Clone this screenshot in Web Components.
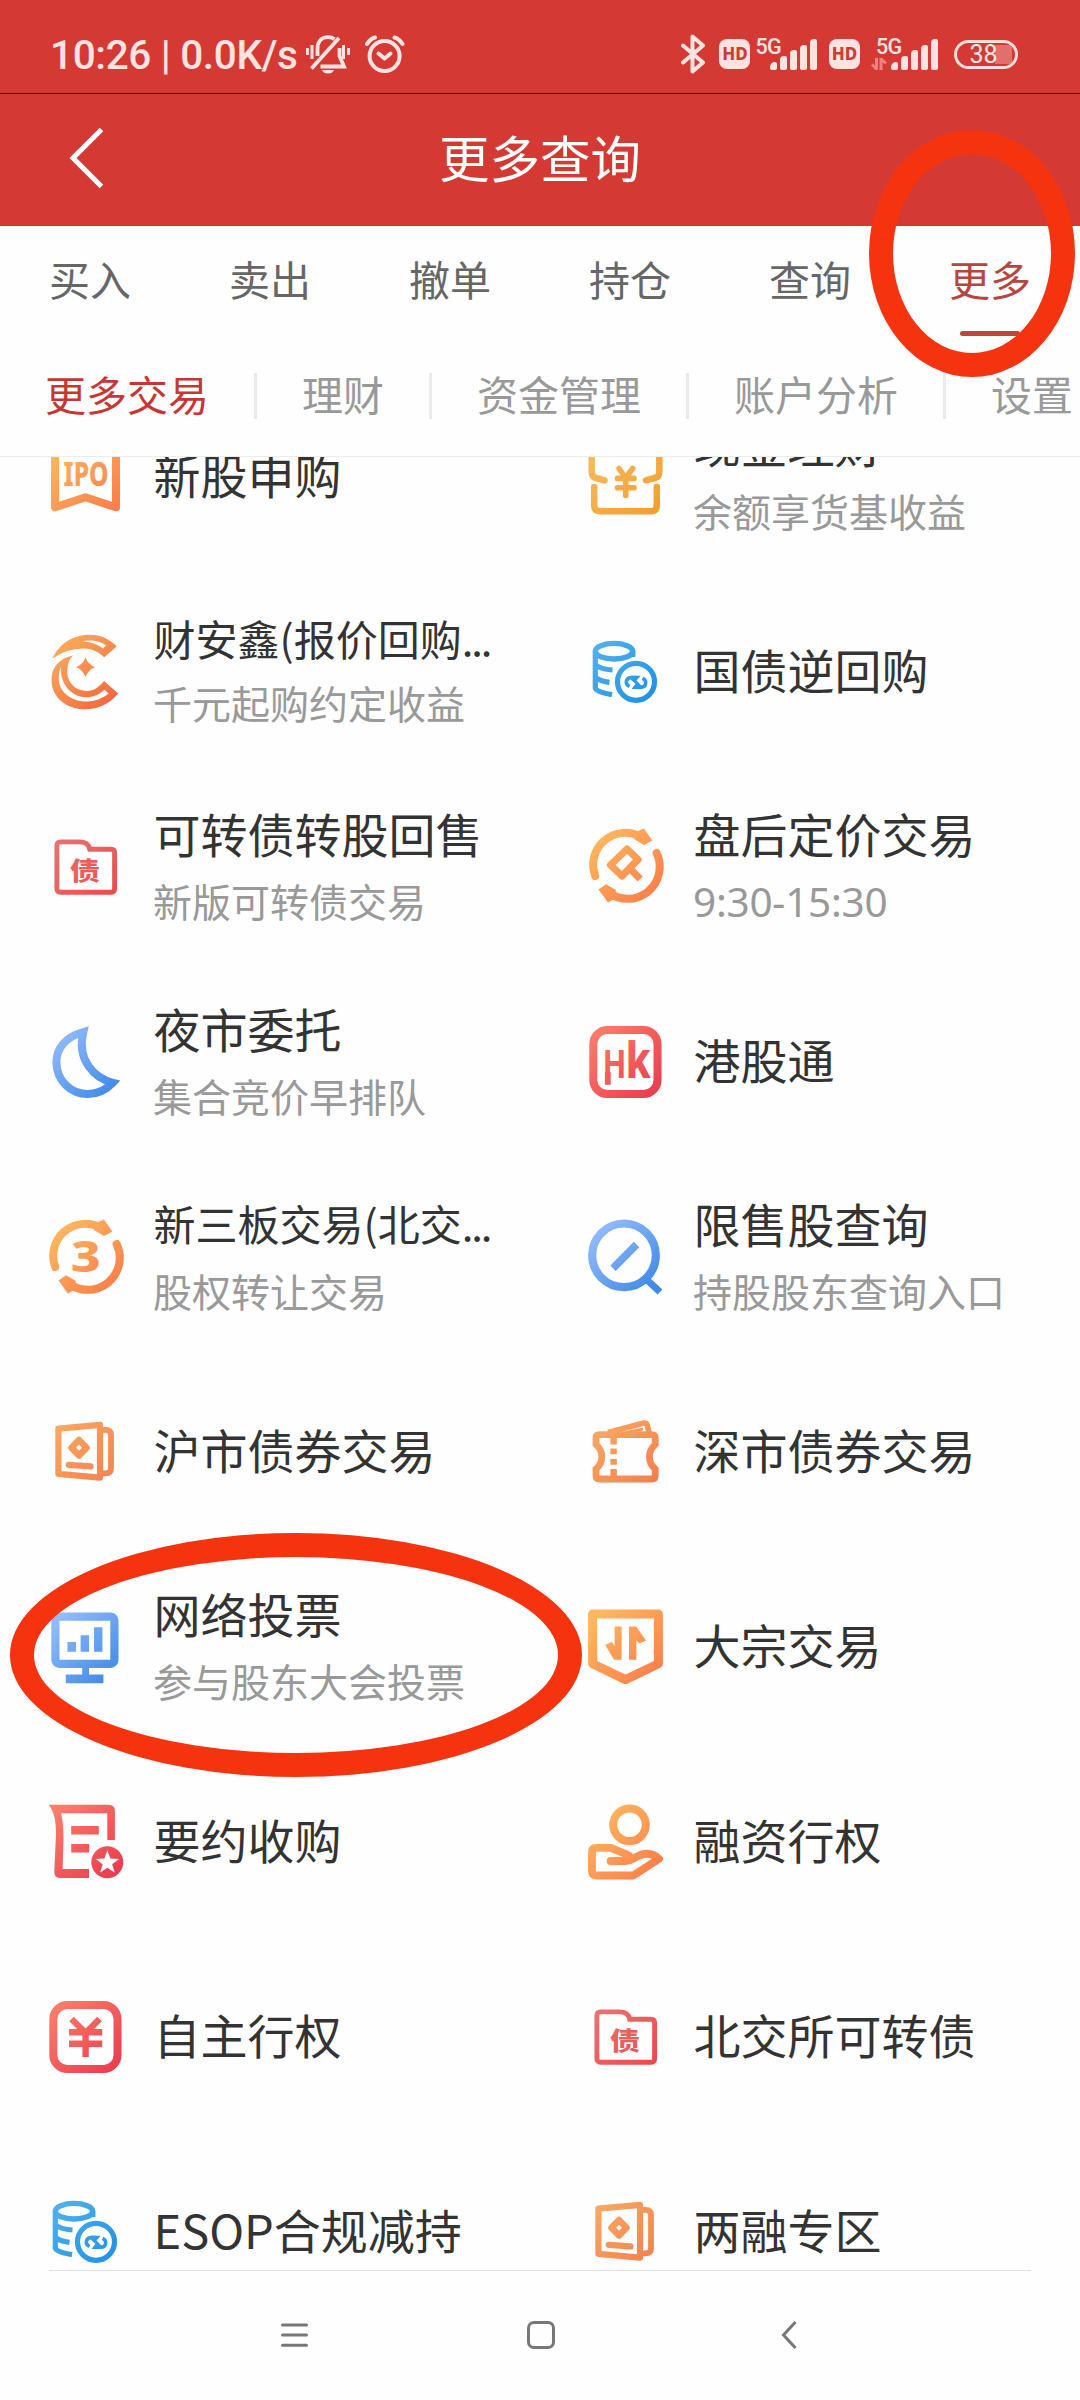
<!DOCTYPE html>
<html lang="zh-CN">
<head>
<meta charset="utf-8">
<title>更多查询</title>
<style>
html,body{margin:0;padding:0}
body{width:1080px;height:2400px;overflow:hidden;background:#fefefe;font-family:"Noto Sans CJK SC",sans-serif}
</style>
</head>
<body>
<trade-page></trade-page>
<script>
const define = (name, html) => customElements.define(name, class extends HTMLElement {
  constructor() {
    super();
    const t = document.createElement('template');
    t.innerHTML = html;
    this.attachShadow({ mode: 'open' }).append(t.content.cloneNode(true));
  }
});

/* ---- Icons, all on a 76 unit square ---- */
const PALETTE = {
  orange: ['#ffb860', '#fb7f4a'],
  amber: ['#fbae5c', '#f2673f'],
  book: ['#f8aa62', '#f4804f'],
  gold: ['#f6bb62', '#f3a02f'],
  red: ['#fb7c69', '#e93f50'],
  rose: ['#e97474', '#ea4a48'],
  blue: ['#95bdfb', '#3f8ae6'],
  sky: ['#52b1ec', '#1d90e8']
};
const ringArrows = `
  <path d="M7.2 48A32 32 0 0 1 52 8.5" stroke-width="8" stroke-linecap="round"/>
  <path d="M68.6 25A32 32 0 0 1 20 64" stroke-width="8" stroke-linecap="round"/>
  <path d="M50 3 56 .6 64.3 12.6 56 17 46 11ZM10.5 61.5 18 56.3 28 62 25 71.5 20 74.5Z" class="f"/>`;
const frame = `<rect x="5.3" y="6" width="64.2" height="64" rx="14" stroke-width="8"/>`;
const ICONS = {
  ipo: ['orange', `<path d="M7 4H68V68.3L37.5 58.3 7 68.3Z" stroke-width="8" stroke-linejoin="round"/>
    <text x="15.500" y="47.3" font-family="Noto Sans" font-weight="800" font-size="33" textLength="45" lengthAdjust="spacingAndGlyphs">IPO</text>`],
  cash: ['gold', `<path d="M16.5 41.3 8 39Q3.7 38 3.7 33V12Q3.7 6 10 6H65Q71.3 6 71.3 12V33Q71.3 38 67 39L58 41.3M6.2 48V66Q6.2 72.2 12 72.2H63Q68.8 72.2 68.8 66V48" stroke-width="6.5" stroke-linecap="round"/>
    <path d="M31 29.5 37.7 39 44.6 29.5M37.7 39V56.5M29.5 39.4H46M29.5 48.8H46" stroke-width="5.6" stroke-linecap="round"/>`],
  cash2: ['amber', `<path class="f" d="M4.3 24.8C12 8 27 .8 42 .8 53 .8 62 5.5 68.6 12.4L56.2 23.2C50 17.5 44 14.5 36 14.5 24 14.5 14 18 4.3 24.8Z"/>
    <path class="w" d="M34 7.3C43 5.6 52 6.8 58.2 11.3L55 14.6C48 9.4 42 8 34 7.3Z"/>
    <path class="f" d="M24.8 21.5C10 25 3.5 34 3.5 46 3.5 63 18 75.3 37 75.3 51 75.3 61 70 70.2 59.5L56 47C51 53 46 57 39 57 27 57 19.3 48 19.3 38 19.3 31 21 26 24.8 21.5Z"/>
    <path class="w" d="M13 32.500C8.500 44 10.500 55.500 20 62 32 70 49 69.500 60.500 59.6L56.6 55.8C47 64.3 36 65.2 27 60.5 16.500 54.500 12 43.500 13 32.500Z"/>
    <path class="f" d="M37.5 23.500Q40 30.500 47 33.2 40 35.9 37.5 43 35 35.9 28 33.2 35 30.500 37.5 23.500Z"/>`],
  coins: ['sky', `<ellipse cx="26" cy="17.2" rx="18.6" ry="7.8" stroke-width="5.4"/>
    <path d="M7.3 17V54Q8 57.8 24 60.6M7.3 30.5Q12 35.3 24.5 36M7.3 43Q11 47 21.5 48.3M44.8 17V23" stroke-width="5.2"/>
    <circle cx="48" cy="47.8" r="18.5" stroke-width="5.2"/>
    <path d="M48 43.6H43Q38.3 44 38.3 48.4 38.4 51 41.5 52.4M48 53.2H53Q57.7 52.8 57.7 48.4 57.6 45.6 54.5 44.4" stroke-width="3.6"/>
    <path class="f" d="M43 41.800H52.800L48.500 46.500 53.500 51.500V55H43.500L47.500 49.800 43 46Z"/><path d="M52.500 42.500 44 54" stroke-width="0"/>`],
  folder: ['rose', `<path d="M12.5 12.9H31Q40.5 12.9 41.8 20.3H63Q66.6 20.3 66.6 24V59.5Q66.6 63.2 63 63.2H12.5Q8.9 63.2 8.9 59.5V16.5Q8.9 12.9 12.5 12.9Z" stroke-width="4.9"/>
    <text x="22" y="51" font-family="Noto Sans CJK SC" font-weight="900" font-size="25" textLength="30" lengthAdjust="spacingAndGlyphs">债</text>`],
  tag: ['orange', `<g transform="translate(0 -1)">` + ringArrows + `<path d="M39 21 50 31.5 34 48 22.5 37Z" stroke-width="7.2" stroke-linejoin="round"/><path d="M42 40.5 52.2 51" stroke-width="7"/></g>`],
  moon: ['blue', `<path d="M35.3 8C17 13 8.4 25 8.4 38 8.4 57 23 70 40 70 50.5 70 58 66 64.8 58.8 46 54 28.5 36 35.3 8Z" stroke-width="8" stroke-miterlimit="2.2"/>`],
  hk: ['red', frame + `<text x="14.500" y="53.8" font-family="Noto Sans" font-weight="700" font-size="38.5" textLength="24" lengthAdjust="spacingAndGlyphs">H</text><text x="37.8" y="53.8" font-family="Noto Sans" font-weight="800" font-size="50" textLength="25" lengthAdjust="spacingAndGlyphs">k</text><rect class="f" x="16.9" y="48" width="5.8" height="12.8"/>`],
  three: ['orange', ringArrows + `<text x="22.8" y="52.6" font-family="Noto Sans" font-weight="800" font-size="42" textLength="30" lengthAdjust="spacingAndGlyphs">3</text>`],
  search: ['blue', `<circle cx="36" cy="36.3" r="31.8" stroke-width="8.2"/><path d="M57.5 59.5 72 73" stroke-width="7"/><path d="M48.5 25.5 25 49.2" stroke-width="7.6"/>`],
  book: ['book', `<path d="M10.4 14.6 52 10.8V63.6L10.4 59.8Z" stroke-width="6.2" stroke-linejoin="round"/>
    <path d="M54 15.8H57.5Q63 15.8 63 21V54Q63 59.4 57.5 59.4H54" stroke-width="5.8"/>
    <path d="M31 26 38.5 33.7 31 41.4 23.5 33.7Z" stroke-width="6.6" stroke-linejoin="round"/><path d="M20.8 50.8 42.5 52.4" stroke-width="6.2" stroke-linecap="round"/>`],
  ticket: ['book', `<path d="M11.5 20.6H64Q67.2 20.6 67.2 24V30.5C59.5 37 59.5 48.5 67.2 55V61.5Q67.2 65 64 65H11.5Q8 65 8 61.5V55C15.7 48.5 15.7 37 8 30.5V24Q8 20.6 11.5 20.6Z" stroke-width="6.8"/>
    <path d="M20 18.5 55 9.3Q58.5 8.6 59.4 11.5L61 19" stroke-width="5.6"/><path d="M38 18.500 55 15" stroke-width="3"/>
    <path d="M25.6 24V30.5M25.6 34.5V40.3M25.6 45V50.7M25.6 55V62" stroke-width="6.400"/>`],
  monitor: ['blue', `<rect x="7.4" y="7.6" width="59" height="47.2" rx="4" stroke-width="8.2"/>
    <path class="f" d="M34.2 57H41V65.5H55.4V74.2H17.8V65.5H34.2ZM19.4 33H28V42.8H19.4ZM32.6 26.2H41V42.8H32.6ZM46 18.2H54.4V42.8H46Z"/>`],
  block: ['orange', `<path d="M4.6 4.9H70.4V54.8L37.5 70.6 4.6 54.8Z" stroke-width="9" stroke-linejoin="round"/>
    <path class="f" d="M26.6 17.4H33.6V50.8H26L17.2 36 24 33 26.6 37ZM41 50.8V17.4H48.2L58 31.4 51.6 34.6 48.4 31.5V50.8Z"/>`],
  doc: ['red', `<path class="f" d="M.8 .8H60.5Q66.9 .8 66.9 7V36H59.3V9.2H13C15 18 15.5 24 15.5 34L14.6 65H41V74H12Q6 74 6.3 67L8 30C8 16 6 8 .8 .8ZM23.2 22H50.8V30.6H23.2ZM23.2 40H41.2V48.6H23.2Z"/>
    <circle cx="59.3" cy="58.3" r="16" class="f"/>
    <path class="w" d="M59.3 46.2 62.4 54.6 71 54.9 64.2 60.2 66.6 68.6 59.3 63.7 52.2 68.6 54.6 60.2 47.8 54.9 56.4 54.6Z"/>`],
  hand: ['orange', `<circle cx="41.5" cy="20.8" r="16.3" stroke-width="8"/>
    <path d="M22.6 57H36Q41 57.5 46 54.2C56 47.8 64 48.2 71 54.8L45.3 71.5H8.5Q4 71.5 4 67V48Q4 43.8 8.5 43.8H23L41 51.5" stroke-width="7.8" stroke-linecap="round" stroke-linejoin="round"/>`],
  yen: ['red', frame + `<path d="M23.5 20 37.6 34 51.5 20M37.6 33V58M21 33.2H54.2M21 44.8H54.2" stroke-width="6.4"/>`]
};
customElements.define('app-icon', class extends HTMLElement {
  constructor() { super(); this.attachShadow({ mode: 'open' }); }
  connectedCallback() {
    const [tone, shapes] = ICONS[this.getAttribute('name')];
    const [a, b] = PALETTE[tone];
    this.shadowRoot.innerHTML = `<style>:host{display:block;width:76px;height:76px;flex:none}
      svg{display:block;overflow:visible;fill:none;stroke:url(#g)}
      .f,text{fill:url(#g);stroke:none}.w{fill:#fefefe;stroke:none}</style>
      <svg width="76" height="76" viewBox="0 0 76 76"><defs><linearGradient id="g" gradientUnits="userSpaceOnUse" x1="8" y1="8" x2="66" y2="68">
      <stop stop-color="${a}"/><stop offset="1" stop-color="${b}"/></linearGradient></defs>${shapes}</svg>`;
  }
});

/* ---- Status bar ---- */
define('signal-bars', `<style>:host{display:flex;align-items:flex-end;gap:3.1px;height:31px}
  i{width:7px;background:#ffe3e1;border-radius:2px}</style>
  <i style="height:8px;border-top-left-radius:5px"></i><i style="height:14px;border-top-left-radius:4px"></i><i style="height:20px;border-top-left-radius:4px"></i><i style="height:25px;border-top-left-radius:4px"></i><i style="height:31px;border-top-left-radius:4px"></i>`);
define('hd-badge', `<style>:host{display:flex;align-items:center;justify-content:center;width:31px;height:30px;border-radius:8px;background:#ffe3e1;color:#cf3c35;font:800 17px/30px "Noto Sans",sans-serif}</style>HD`);
define('battery-pill', `<style>:host{display:flex;box-sizing:border-box;width:64px;height:29px;border:3px solid #ffdedb;border-radius:15px;justify-content:center;align-items:center;color:#ffe8e6;
  font:400 25px/24px Roboto,sans-serif;background:linear-gradient(90deg,#e2706a,#e2706a) 38px 50%/17px 19px no-repeat;}span{padding-right:5px;padding-top:1px}</style><span><slot></slot></span>`);
define('status-bar', `<style>
  :host{display:flex;box-sizing:border-box;height:93px;padding:15px 62px 0 50px;align-items:center;color:#ffe3e1}
  .clock{font:500 40.500px/48px Roboto,sans-serif;width:248px;margin-right:8px;padding-top:1px;white-space:nowrap;letter-spacing:-.350px}
  svg{display:block;flex:none}
  .right{margin-left:auto;display:flex;align-items:center}
  .g{font:500 21.5px/22px Roboto,sans-serif;align-self:flex-start;letter-spacing:-.6px}
  .net{display:flex;height:36px;align-items:flex-start}
  .col{display:flex;flex-direction:column}
  </style>
  <span class="clock">10:26 | 0.0K/s</span>
  <svg width="44" height="40" viewBox="0 0 44 40" fill="none" stroke="#ffe3e1" stroke-width="3.8">
    <path d="M1.4 14V21M6 11V25M37.5 11V25M42.6 14V21" stroke-width="3"/><path d="M33 4 5.5 34.5"/>
    <path d="M11.5 22V15C11.5 6 17 3.2 22 3.2Q26 3.2 28.5 5.2M33.5 14V22L38 32.5H14.5"/><path d="M16 36H28Q26.5 39.5 22 39.5 17.500 39.500 16 36Z" fill="#ffe3e1" stroke="none"/>
  </svg>
  <svg width="40" height="38" viewBox="0 0 40 38" fill="none" stroke="#ffe3e1" stroke-width="4" style="margin-left:15px">
    <circle cx="19.600" cy="21" r="15"/><path d="M13.500 18.500 19.600 23.500 25.500 18.500" stroke-width="4" stroke-linecap="round" stroke-linejoin="round"/><path d="M2 9Q5 4 10 2.500M29.500 2.500Q34.500 4 37.500 9" stroke-linecap="round"/>
  </svg>
  <div class="right">
    <svg width="25" height="40" viewBox="0 0 25 40" fill="none" stroke="#ffe3e1" stroke-width="4" stroke-linejoin="round" stroke-linecap="round"><path d="M2 11.500 22 28.500 11.500 37.500V2.500L22 11.500 2 28.500"/></svg>
    <hd-badge style="margin-left:13px"></hd-badge>
    <div class="net" style="margin-left:5px"><span class="g">5G</span><signal-bars style="margin:3px 0 0 -11px"></signal-bars></div>
    <hd-badge style="margin-left:11.500px"></hd-badge>
    <div class="net" style="margin-left:11px"><div class="col"><span class="g" style="margin-left:5px">5G</span>
      <svg width="16" height="12" viewBox="0 0 16 12" fill="none" stroke="#ee827c" stroke-width="3"><path d="M5.500 0V11L1 6.500M10 12V1L15 5.500"/></svg></div>
      <signal-bars style="margin:3px 0 0 -11px"></signal-bars></div>
    <battery-pill style="margin-left:16px">38</battery-pill>
  </div>`);

define('app-header', `<style>
  :host{display:grid;grid-template-columns:1fr auto 1fr;align-items:center;box-sizing:border-box;height:133px;border-top:1px solid #3d0f10;color:#fff}
  svg{display:block;margin-left:69px;margin-bottom:5px}
  h1{margin:0;font-size:50.5px;font-weight:400;line-height:72px;padding-bottom:8px}</style>
  <svg width="36" height="62" viewBox="0 0 36 62" fill="none" stroke="#fff" stroke-width="5"><path d="M32.500 2.500 4 31 32.500 59.500"/></svg>
  <h1><slot></slot></h1>`);

/* ---- Tabs ---- */
define('main-tab', `<style>:host{flex:1;display:flex;flex-direction:column;align-items:center;padding-top:22px;color:#666;font-size:41px;line-height:60px}
  i{height:5px;width:60px;border-radius:3px;margin-top:23px}
  :host([active]){color:#b8443d}:host([active]) i{background:#bd463f}</style><slot></slot><i></i>`);
define('main-tabs', `<style>:host{display:flex;height:126px}</style><slot></slot>`);
define('sub-tab', `<style>:host{flex:none;padding:0 45px;border-right:3px solid #eaeaea;color:#999;font-size:41px;line-height:46px;height:46px;white-space:nowrap}
  :host([active]){color:#c93632;padding-left:45px;padding-right:45px}:host(:last-child){border:0}span{display:block;margin-top:-3px}</style><span><slot></slot></span>`);
define('sub-tabs', `<style>:host{display:flex;box-sizing:border-box;height:105px;padding-top:21px;border-bottom:1px solid #ebebeb;overflow:hidden}</style><slot></slot>`);

/* ---- Menu ---- */
customElements.define('menu-item', class extends HTMLElement {
  constructor() { super(); this.attachShadow({ mode: 'open' }); }
  connectedCallback() {
    const sub = this.getAttribute('sub');
    this.shadowRoot.innerHTML = `<style>
      :host{display:flex;align-items:center;height:195px;padding-left:48px;gap:29.500px;box-sizing:border-box;white-space:nowrap}
      .t{font-size:47px;line-height:66px;color:#333;padding-bottom:6px}
      :host([small]) .t{font-size:42px}
      .t.two{padding:0}
      .s{font-size:39px;line-height:50px;color:#999;margin:9.500px 0 8px -.500px}
      :host([tight]) .s{margin-top:6px;margin-bottom:11.500px}
      .dots{letter-spacing:-2.200px}
      .s.num{font-family:"Noto Sans","Noto Sans CJK SC",sans-serif;font-size:40.500px;letter-spacing:-.250px;margin-top:11px;margin-bottom:6.500px}
      </style><app-icon name="${this.getAttribute('icon')}"></app-icon>
      <div><div class="t ${sub ? 'two' : ''}">${this.textContent.replace('...', '<span class="dots">...</span>')}</div>${sub ? `<div class="s ${/^\d/.test(sub) ? 'num' : ''}">${sub}</div>` : ''}</div>`;
  }
});
define('menu-grid', `<style>:host{display:block;height:1813px;overflow:hidden}
  div{display:grid;grid-template-columns:540px 540px;grid-auto-rows:195px;margin-top:-78px}</style><div><slot></slot></div>`);

define('system-nav', `<style>:host{display:flex;height:129px;flex-direction:column;align-items:center}
  hr{width:982px;height:1px;border:0;background:#e2e2e2;margin:0}
  div{display:flex;width:516px;margin:50px 0 0 -2px;align-items:center}
  svg{display:block}</style><hr>
  <div><svg width="27" height="28" viewBox="0 0 27 28" stroke="#777" stroke-width="3" stroke-linecap="round"><path d="M1.500 4H25.500M1.500 14H25.500M1.500 24.200H25.500"/></svg>
  <svg style="margin:0 226px 0 219px" width="28" height="28" viewBox="0 0 28 28" fill="none" stroke="#777" stroke-width="3"><rect x="1.500" y="1.500" width="25" height="25" rx="5.500"/></svg>
  <svg width="16" height="28" viewBox="0 0 16 28" fill="none" stroke="#777" stroke-width="3"><path d="M14.500 1 2.500 14 14.500 27"/></svg></div>`);

/* Hand-placed highlight ring that floats over the page */
define('focus-ring', `<style>:host{position:absolute;box-sizing:border-box;border:24.300px solid #f5330f;border-radius:50%;pointer-events:none}</style>`);

define('trade-page', `<style>:host{display:block;position:relative;width:1080px;height:2400px;overflow:hidden;background:#fefefe}
  .top{background:#d43a33}</style>
  <div class="top"><status-bar></status-bar><app-header>更多查询</app-header></div>
  <main-tabs><main-tab>买入</main-tab><main-tab>卖出</main-tab><main-tab>撤单</main-tab><main-tab>持仓</main-tab><main-tab>查询</main-tab><main-tab active>更多</main-tab></main-tabs>
  <sub-tabs><sub-tab active>更多交易</sub-tab><sub-tab>理财</sub-tab><sub-tab>资金管理</sub-tab><sub-tab>账户分析</sub-tab><sub-tab>设置</sub-tab></sub-tabs>
  <menu-grid>
    <menu-item icon="ipo">新股申购</menu-item>
    <menu-item icon="cash" sub="余额享货基收益">现金理财</menu-item>
    <menu-item icon="cash2" small tight sub="千元起购约定收益">财安鑫(报价回购...</menu-item>
    <menu-item icon="coins">国债逆回购</menu-item>
    <menu-item icon="folder" sub="新版可转债交易">可转债转股回售</menu-item>
    <menu-item icon="tag" sub="9:30-15:30">盘后定价交易</menu-item>
    <menu-item icon="moon" sub="集合竞价早排队">夜市委托</menu-item>
    <menu-item icon="hk">港股通</menu-item>
    <menu-item icon="three" small sub="股权转让交易">新三板交易(北交...</menu-item>
    <menu-item icon="search" sub="持股股东查询入口">限售股查询</menu-item>
    <menu-item icon="book">沪市债券交易</menu-item>
    <menu-item icon="ticket">深市债券交易</menu-item>
    <menu-item icon="monitor" sub="参与股东大会投票">网络投票</menu-item>
    <menu-item icon="block">大宗交易</menu-item>
    <menu-item icon="doc">要约收购</menu-item>
    <menu-item icon="hand">融资行权</menu-item>
    <menu-item icon="yen">自主行权</menu-item>
    <menu-item icon="folder">北交所可转债</menu-item>
    <menu-item icon="coins">ESOP合规减持</menu-item>
    <menu-item icon="book">两融专区</menu-item>
  </menu-grid>
  <system-nav></system-nav>
  <focus-ring style="left:869px;top:130px;width:206px;height:247px"></focus-ring>
  <focus-ring style="left:9.500px;top:1533px;width:572.500px;height:244px"></focus-ring>`);
</script>
</body>
</html>
